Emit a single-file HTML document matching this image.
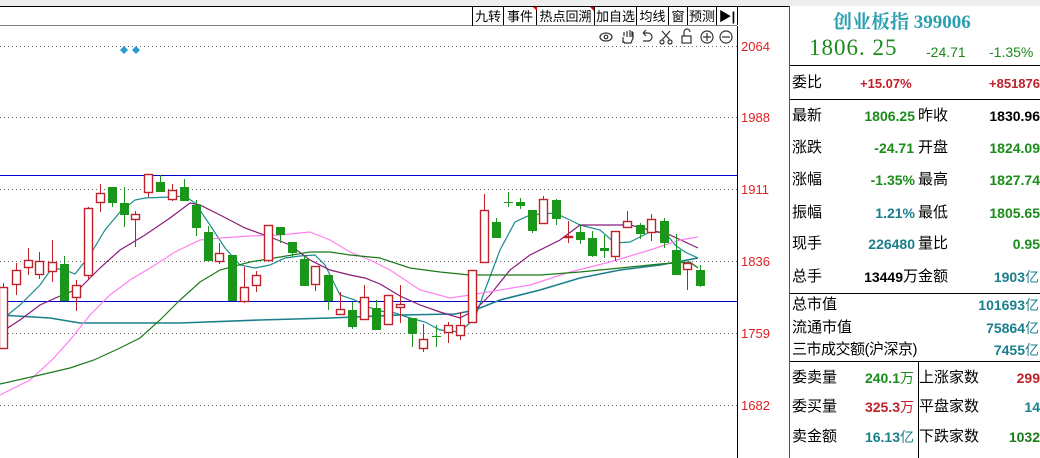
<!DOCTYPE html>
<html><head><meta charset="utf-8"><style>
body{margin:0;width:1040px;height:458px;overflow:hidden;background:#fff;font-family:"Liberation Sans","Noto Sans CJK SC",sans-serif;position:relative}
.a{position:absolute;white-space:nowrap}
.tb{position:absolute;top:7px;height:18px;border-right:1px solid #000;font-size:13px;line-height:19px;text-align:center;color:#000}
.lab{position:absolute;font-size:13px;color:#e02020;left:741px}
.r{position:absolute;font-size:14px;line-height:16px;white-space:nowrap}
.k{color:#000;font-size:15px}
.g{color:#1a8c1a;font-weight:bold}
.rd{color:#c0202a;font-weight:bold}
.t{color:#1a7f8c;font-weight:bold}
.b{color:#000;font-weight:bold}
.num{text-align:right}
</style></head><body>
<div class="a" style="left:0;top:0;width:1040px;height:6px;background:#eeeeee"></div>
<div class="a" style="left:0;top:6px;width:789px;height:1px;background:#000"></div>
<div class="a" style="left:0;top:25px;width:737px;height:1px;background:#808080"></div>
<div class="a" style="left:472px;top:6px;width:1px;height:20px;background:#000"></div>
<div class="tb" style="left:473px;width:30px">九转</div>
<div class="tb" style="left:504px;width:32px">事件</div>
<div class="tb" style="left:537px;width:57px">热点回溯</div>
<div class="tb" style="left:595px;width:41px">加自选</div>
<div class="tb" style="left:637px;width:31px">均线</div>
<div class="tb" style="left:669px;width:18px">窗</div>
<div class="tb" style="left:688px;width:28px">预测</div>
<div class="tb" style="left:717px;width:20px;font-weight:bold">▶|</div>
<div class="a" style="left:533px;top:7px;width:0;height:0;border-top:4px solid #e00;border-left:4px solid transparent"></div>
<div class="a" style="left:590px;top:7px;width:0;height:0;border-top:4px solid #e00;border-left:4px solid transparent"></div>
<svg class="a" style="left:0;top:0" width="1040" height="458">
<g fill="none" stroke="#333" stroke-width="1.2">
<ellipse cx="606" cy="37" rx="6" ry="4"/><circle cx="606" cy="37" r="1.8"/>
<path d="M623 43 v-6 M625 43 l-2-2 M624 43 h7 l2-5 v-6 M627 37 v-6 M630 37 v-7 M632 37 v-6 M624 36 v-4"/>
<path d="M643 33 h5 a4 4 0 0 1 0 8 h-5 M643 33 l3-3 M643 33 l3 3"/>
<path d="M662 31 l8 9 M670 31 l-8 9"/><circle cx="662" cy="42" r="2"/><circle cx="670" cy="42" r="2"/>
<rect x="682" y="36" width="9" height="7"/><path d="M684 36 v-4 a3 3 0 0 1 6 0"/>
<circle cx="707" cy="37" r="6"/><path d="M703 37h8M707 33v8"/>
<circle cx="726" cy="37" r="6"/><path d="M722 37h8"/>
</g>
<line x1="737.5" y1="26" x2="737.5" y2="458" stroke="#000"/>
<line x1="789.5" y1="6" x2="789.5" y2="458" stroke="#555"/>
<g stroke="#666" stroke-dasharray="1,3">
<line x1="0" y1="46.5" x2="737" y2="46.5"/><line x1="0" y1="117.5" x2="737" y2="117.5"/>
<line x1="0" y1="189.5" x2="737" y2="189.5"/><line x1="0" y1="261.5" x2="737" y2="261.5"/>
<line x1="0" y1="333.5" x2="737" y2="333.5"/><line x1="0" y1="405.5" x2="737" y2="405.5"/>
</g>
<line x1="0" y1="175.5" x2="737" y2="175.5" stroke="#0000d0"/>
<line x1="0" y1="301.5" x2="737" y2="301.5" stroke="#0000d0"/>
<path d="M124 46l4 4-4 4-4-4zM136 46l4 4-4 4-4-4z" fill="#2a9ad0"/>
<g fill="none" stroke-width="1.2">
<polyline stroke="#1a7f8c" stroke-width="1.6" points="0,315 50,318 80,323 180,323 260,320 330,318 400,315 455,314 475,310 500,300 540,290 580,278 620,270 660,265 698,258"/>
<polyline stroke="#1a8c8c" points="0,321 20,305 40,285 52,268 65,270 75,274 90,255 105,230 120,212 135,200 145,198 170,197 185,196 195,203 210,225 225,248 240,265 255,268 270,265 285,258 300,256 315,255 325,265 340,295 355,300 365,306 380,311 395,313 410,318 425,322 440,330 460,332 475,318 485,290 500,250 515,222 530,215 555,213 570,220 580,225 600,230 615,243 630,242 650,232 665,232 675,245 685,252 698,258"/>
<polyline stroke="#8a1a7a" points="0,333 20,320 40,305 60,296 80,288 100,268 120,250 145,235 170,218 190,203 200,205 220,215 245,228 270,237 290,245 310,260 330,270 350,275 365,278 380,284 400,296 420,305 440,312 460,318 475,310 490,295 510,270 530,255 560,240 580,225 600,225 630,225 650,230 670,235 698,248"/>
<polyline stroke="#ff80f0" points="0,395 30,380 52,360 70,340 90,315 110,295 130,280 155,265 175,252 200,240 220,238 250,236 280,235 310,232 330,240 350,252 370,260 390,270 420,290 450,298 470,295 500,290 530,285 570,272 610,262 650,250 680,240 698,237"/>
<polyline stroke="#1a7a1a" points="0,384 40,375 70,368 94,360 120,348 140,338 160,320 180,300 200,282 220,270 250,262 280,257 310,252 330,252 350,255 380,258 410,268 440,272 470,275 500,275 540,275 580,272 620,268 660,264 690,262 698,268"/>
</g>
<g id="c"></g>
</svg>
<script>
var C=[[3,'r',287,348,283,348],[16,'r',270,284,263,295],[28,'r',260,267,248,275],[39,'r',261,274,252,279],[52,'r',262,271,240,282],[64,'g',264,301,256,301],[76,'r',285,297,280,311],[88,'r',208,275,207,279],[100,'r',193,202,184,212],[112,'g',187,203,187,207],[124,'g',203,215,187,227],[135,'r',214,219,211,247],[148,'r',174,192,174,197],[160,'g',182,192,175,192],[172,'r',190,199,184,201],[184,'g',187,201,179,201],[196,'g',205,228,200,236],[208,'g',232,261,226,261],[219,'r',253,261,243,264],[232,'g',255,301,255,301],[244,'r',287,301,267,303],[256,'r',275,285,271,292],[268,'r',225,260,225,260],[280,'g',227,235,227,243],[292,'g',242,253,242,257],[304,'g',259,286,256,286],[315,'r',266,284,266,291],[328,'g',275,301,275,310],[340,'r',309,314,292,315],[352,'g',310,327,302,329],[364,'r',297,319,285,319],[376,'g',308,330,300,330],[388,'r',295,324,295,324],[400,'r',304,307,285,323],[412,'g',318,334,318,347],[423,'r',339,348,324,352],[436,'g',336,336,325,347],[448,'r',325,332,322,343],[460,'r',325,335,312,340],[472,'r',270,322,270,322],[484,'r',210,262,194,262],[496,'g',222,238,218,238],[508,'g',202,202,192,207],[520,'g',202,206,198,209],[532,'g',210,231,210,233],[543,'r',199,223,196,223],[556,'g',200,219,199,225],[568,'r',236,236,221,243],[580,'g',232,240,225,244],[592,'g',238,256,231,257],[604,'g',248,251,235,258],[615,'r',231,256,231,261],[627,'r',221,227,211,227],[640,'g',225,234,223,239],[651,'r',219,232,214,241],[664,'g',221,243,218,248],[676,'g',250,275,234,275],[687,'r',263,269,262,290],[700,'g',270,286,265,287]];
var s='';C.forEach(function(c){var x=c[0],col=c[1]=='r'?'#c0202a':'#1a961a';
s+='<line x1="'+(x+.5)+'" y1="'+c[4]+'" x2="'+(x+.5)+'" y2="'+c[5]+'" stroke="'+col+'"/>';
var h=Math.max(c[3]-c[2],1);
if(c[1]=='r')s+='<rect x="'+(x-3.5)+'" y="'+(c[2]+.5)+'" width="8" height="'+h+'" fill="#fff" stroke="'+col+'" stroke-width="1.4"/>';
else s+='<rect x="'+(x-4)+'" y="'+c[2]+'" width="9" height="'+h+'" fill="'+col+'"/>';});
document.getElementById('c').innerHTML=s;
</script>
<div class="lab" style="top:39px">2064</div>
<div class="lab" style="top:110px">1988</div>
<div class="lab" style="top:182px">1911</div>
<div class="lab" style="top:254px">1836</div>
<div class="lab" style="top:326px">1759</div>
<div class="lab" style="top:398px">1682</div>
<div class="a" style="left:833px;top:7px;font-size:19px;font-weight:bold;color:#2a9fb0;font-family:'Liberation Serif','Noto Serif CJK SC',serif">创业板指 399006</div>
<div class="a" style="left:809px;top:35px;font-size:23px;color:#1a8c1a;font-family:'Liberation Serif',serif;letter-spacing:1px">1806. 25</div>
<div class="r g" style="left:926px;top:44px;font-weight:normal">-24.71</div>
<div class="r g" style="left:989px;top:44px;font-weight:normal">-1.35%</div>
<div class="a" style="left:790px;top:65px;width:250px;height:1px;background:#000"></div>
<div class="r k" style="left:792px;top:75px">委比</div>
<div class="r rd" style="left:860px;top:76px;font-size:13px">+15.07%</div>
<div class="r rd" style="left:960px;top:76px;width:80px;font-size:13px;text-align:right">+851876</div>
<div class="a" style="left:790px;top:99px;width:250px;height:1px;background:#000"></div>
<div class="r k" style="left:792px;top:108px">最新</div><div class="r g num" style="left:815px;top:108px;width:100px">1806.25</div><div class="r k" style="left:918px;top:108px">昨收</div><div class="r b num" style="left:960px;top:108px;width:80px">1830.96</div>
<div class="r k" style="left:792px;top:140px">涨跌</div><div class="r g num" style="left:814px;top:140px;width:100px">-24.71</div><div class="r k" style="left:918px;top:140px">开盘</div><div class="r g num" style="left:960px;top:140px;width:80px">1824.09</div>
<div class="r k" style="left:792px;top:172px">涨幅</div><div class="r g num" style="left:815px;top:172px;width:100px">-1.35%</div><div class="r k" style="left:918px;top:172px">最高</div><div class="r g num" style="left:960px;top:172px;width:80px">1827.74</div>
<div class="r k" style="left:792px;top:205px">振幅</div><div class="r t num" style="left:815px;top:205px;width:100px">1.21%</div><div class="r k" style="left:918px;top:205px">最低</div><div class="r g num" style="left:960px;top:205px;width:80px">1805.65</div>
<div class="r k" style="left:792px;top:236px">现手</div><div class="r t num" style="left:815px;top:236px;width:100px">226480</div><div class="r k" style="left:918px;top:236px">量比</div><div class="r g num" style="left:960px;top:236px;width:80px">0.95</div>
<div class="r k" style="left:792px;top:269px">总手</div><div class="r b num" style="left:803px;top:269px;width:100px">13449</div><div class="r k" style="left:903px;top:269px">万</div><div class="r k" style="left:918px;top:269px">金额</div><div class="r t num" style="left:960px;top:269px;width:65px">1903</div><div class="r t" style="left:1025px;top:269px;font-weight:normal">亿</div>
<div class="a" style="left:790px;top:293px;width:250px;height:1px;background:#000"></div>
<div class="r k" style="left:792px;top:297px">总市值</div><div class="r t num" style="left:940px;top:297px;width:85px">101693</div><div class="r t" style="left:1025px;top:297px;font-weight:normal">亿</div>
<div class="r k" style="left:792px;top:320px">流通市值</div><div class="r t num" style="left:940px;top:320px;width:85px">75864</div><div class="r t" style="left:1025px;top:320px;font-weight:normal">亿</div>
<div class="r k" style="left:792px;top:342px;letter-spacing:-0.5px">三市成交额(沪深京)</div><div class="r t num" style="left:940px;top:342px;width:85px">7455</div><div class="r t" style="left:1025px;top:342px;font-weight:normal">亿</div>
<div class="a" style="left:790px;top:361px;width:250px;height:1px;background:#000"></div>
<div class="a" style="left:918px;top:361px;width:1px;height:97px;background:#000"></div>
<div class="r k" style="left:792px;top:370px">委卖量</div><div class="r g num" style="left:840px;top:370px;width:60px">240.1</div><div class="r g" style="left:900px;top:370px;font-weight:normal">万</div>
<div class="r k" style="left:919px;top:370px">上涨家数</div><div class="r rd num" style="left:980px;top:370px;width:60px">299</div>
<div class="r k" style="left:792px;top:399px">委买量</div><div class="r rd num" style="left:840px;top:399px;width:60px">325.3</div><div class="r rd" style="left:900px;top:399px;font-weight:normal">万</div>
<div class="r k" style="left:919px;top:399px">平盘家数</div><div class="r t num" style="left:980px;top:399px;width:60px">14</div>
<div class="r k" style="left:792px;top:429px">卖金额</div><div class="r t num" style="left:840px;top:429px;width:60px">16.13</div><div class="r t" style="left:900px;top:429px;font-weight:normal">亿</div>
<div class="r k" style="left:919px;top:429px">下跌家数</div><div class="r num" style="left:980px;top:429px;width:60px;color:#1a7a1a;font-weight:bold">1032</div>
</body></html>
